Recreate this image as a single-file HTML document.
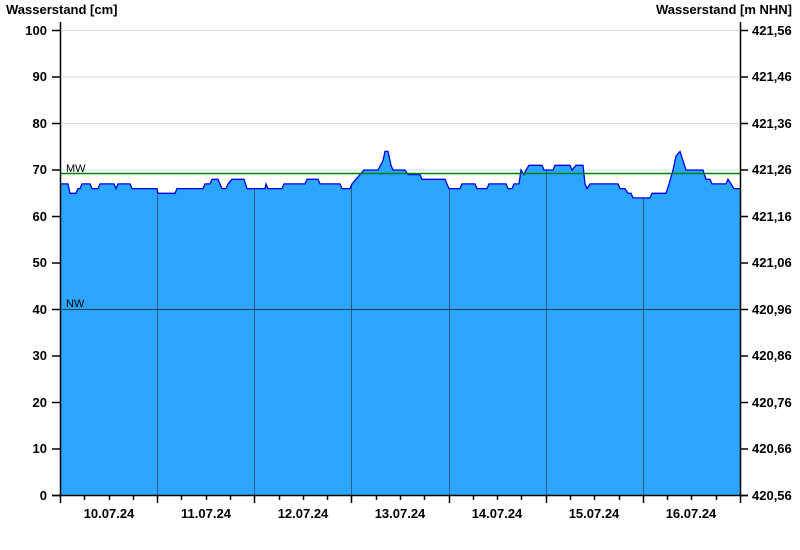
<!DOCTYPE html>
<html><head><meta charset="utf-8"><style>
html,body{margin:0;padding:0;background:#fff;width:800px;height:550px;overflow:hidden}
svg text{font-family:"Liberation Sans",Arial,sans-serif;font-weight:bold;font-size:13px;fill:#000}
</style></head><body>
<svg id="s" width="800" height="550" xmlns="http://www.w3.org/2000/svg">
<defs><clipPath id="cp"><polygon id="cpoly"/></clipPath></defs>
<g id="grid" stroke="#dcdcdc" stroke-width="1"></g>
<polygon id="area" fill="#2ba6ff" stroke="none"/>
<g id="vlines" stroke="#2a5a80" stroke-width="1" clip-path="url(#cp)"></g>
<polyline id="line" fill="none" stroke="#0000ee" stroke-width="1.3"/>
<line x1="60" y1="173.5" x2="740" y2="173.5" stroke="#008000" stroke-width="1.5"/>
<line x1="60" y1="309.5" x2="740" y2="309.5" stroke="#1a3a5a" stroke-width="1"/>
<text x="66" y="172" style="font-weight:normal;font-size:11px">MW</text>
<text x="66" y="307" style="font-weight:normal;font-size:11px">NW</text>
<g id="axes" stroke="#000" stroke-width="1.5"></g>
<text x="6" y="14">Wasserstand [cm]</text>
<text x="792" y="14" text-anchor="end">Wasserstand [m NHN]</text>
<g text-anchor="end">
<text x="47" y="35">100</text><text x="47" y="81">90</text><text x="47" y="128">80</text><text x="47" y="174">70</text><text x="47" y="221">60</text><text x="47" y="267">50</text><text x="47" y="314">40</text><text x="47" y="360">30</text><text x="47" y="407">20</text><text x="47" y="453">10</text><text x="47" y="500">0</text>
</g>
<g>
<text x="752" y="35">421,56</text><text x="752" y="81">421,46</text><text x="752" y="128">421,36</text><text x="752" y="174">421,26</text><text x="752" y="221">421,16</text><text x="752" y="267">421,06</text><text x="752" y="314">420,96</text><text x="752" y="360">420,86</text><text x="752" y="407">420,76</text><text x="752" y="453">420,66</text><text x="752" y="500">420,56</text>
</g>
<g text-anchor="middle">
<text x="109" y="518">10.07.24</text><text x="206" y="518">11.07.24</text><text x="303" y="518">12.07.24</text><text x="400" y="518">13.07.24</text><text x="497" y="518">14.07.24</text><text x="594" y="518">15.07.24</text><text x="691" y="518">16.07.24</text>
</g>
</svg>
<script>
var Y=function(v){return 495.5-4.65*v};
var d=[[60,67],[68,67],[70,65],[76,65],[78,66],[80,66],[82,67],[90,67],[92,66],[98,66],[100,67],[114,67],[116,66],[118,67],[130,67],[132,66],[157,66],[158,65],[175,65],[177,66],[203,66],[205,67],[210,67],[212,68],[218,68],[222,66],[226,66],[228,67],[232,68],[244,68],[247,66],[265,66],[266,67],[268,66],[282,66],[284,67],[305,67],[307,68],[318,68],[320,67],[340,67],[342,66],[350,66],[352,67],[356,68],[360,69],[364,70],[378,70],[383,72],[385,74],[388,74],[391,71],[393,70],[405,70],[408,69],[420,69],[422,68],[445,68],[449,66],[460,66],[462,67],[475,67],[477,66],[487,66],[489,67],[506,67],[508,66],[512,66],[514,67],[519,67],[521,70],[524,69],[526,70],[529,71],[542,71],[544,70],[553,70],[555,71],[570,71],[572,70],[576,71],[583,71],[585,67],[587,66],[590,67],[618,67],[620,66],[625,66],[628,65],[631,65],[633,64],[650,64],[652,65],[666,65],[669,67],[673,70],[676,73],[680,74],[683,72],[686,70],[703,70],[706,68],[710,68],[712,67],[726,67],[728,68],[731,67],[734,66],[740,66]];
var pts=d.map(function(p){return p[0]+","+Y(p[1]).toFixed(1)}).join(" ");
document.getElementById("line").setAttribute("points",pts);
document.getElementById("area").setAttribute("points","60,495.5 "+pts+" 740,495.5");
document.getElementById("cpoly").setAttribute("points","60,495.5 "+pts+" 740,495.5");
var ns="http://www.w3.org/2000/svg";
function L(g,x1,y1,x2,y2){var l=document.createElementNS(ns,"line");l.setAttribute("x1",x1);l.setAttribute("y1",y1);l.setAttribute("x2",x2);l.setAttribute("y2",y2);document.getElementById(g).appendChild(l);}
for(var i=1;i<=10;i++){var y=Y(i*10);L("grid",60,y,740,y);}
var w=680/7;
for(var i=1;i<7;i++){var x=Math.round(60+i*w)+0.5;L("vlines",x,Y(80),x,495);}
L("axes",60.5,22,60.5,496);L("axes",740.5,22,740.5,496);L("axes",52,495.5,748,495.5);
for(var i=0;i<=10;i++){var y=Y(i*10);L("axes",52,y,60,y);L("axes",740,y,748,y);}
for(var i=0;i<=28;i++){var x=Math.round(60+i*w/4)+0.5;L("axes",x,495,x,i%4==0?503:500);}
</script>
</body></html>
